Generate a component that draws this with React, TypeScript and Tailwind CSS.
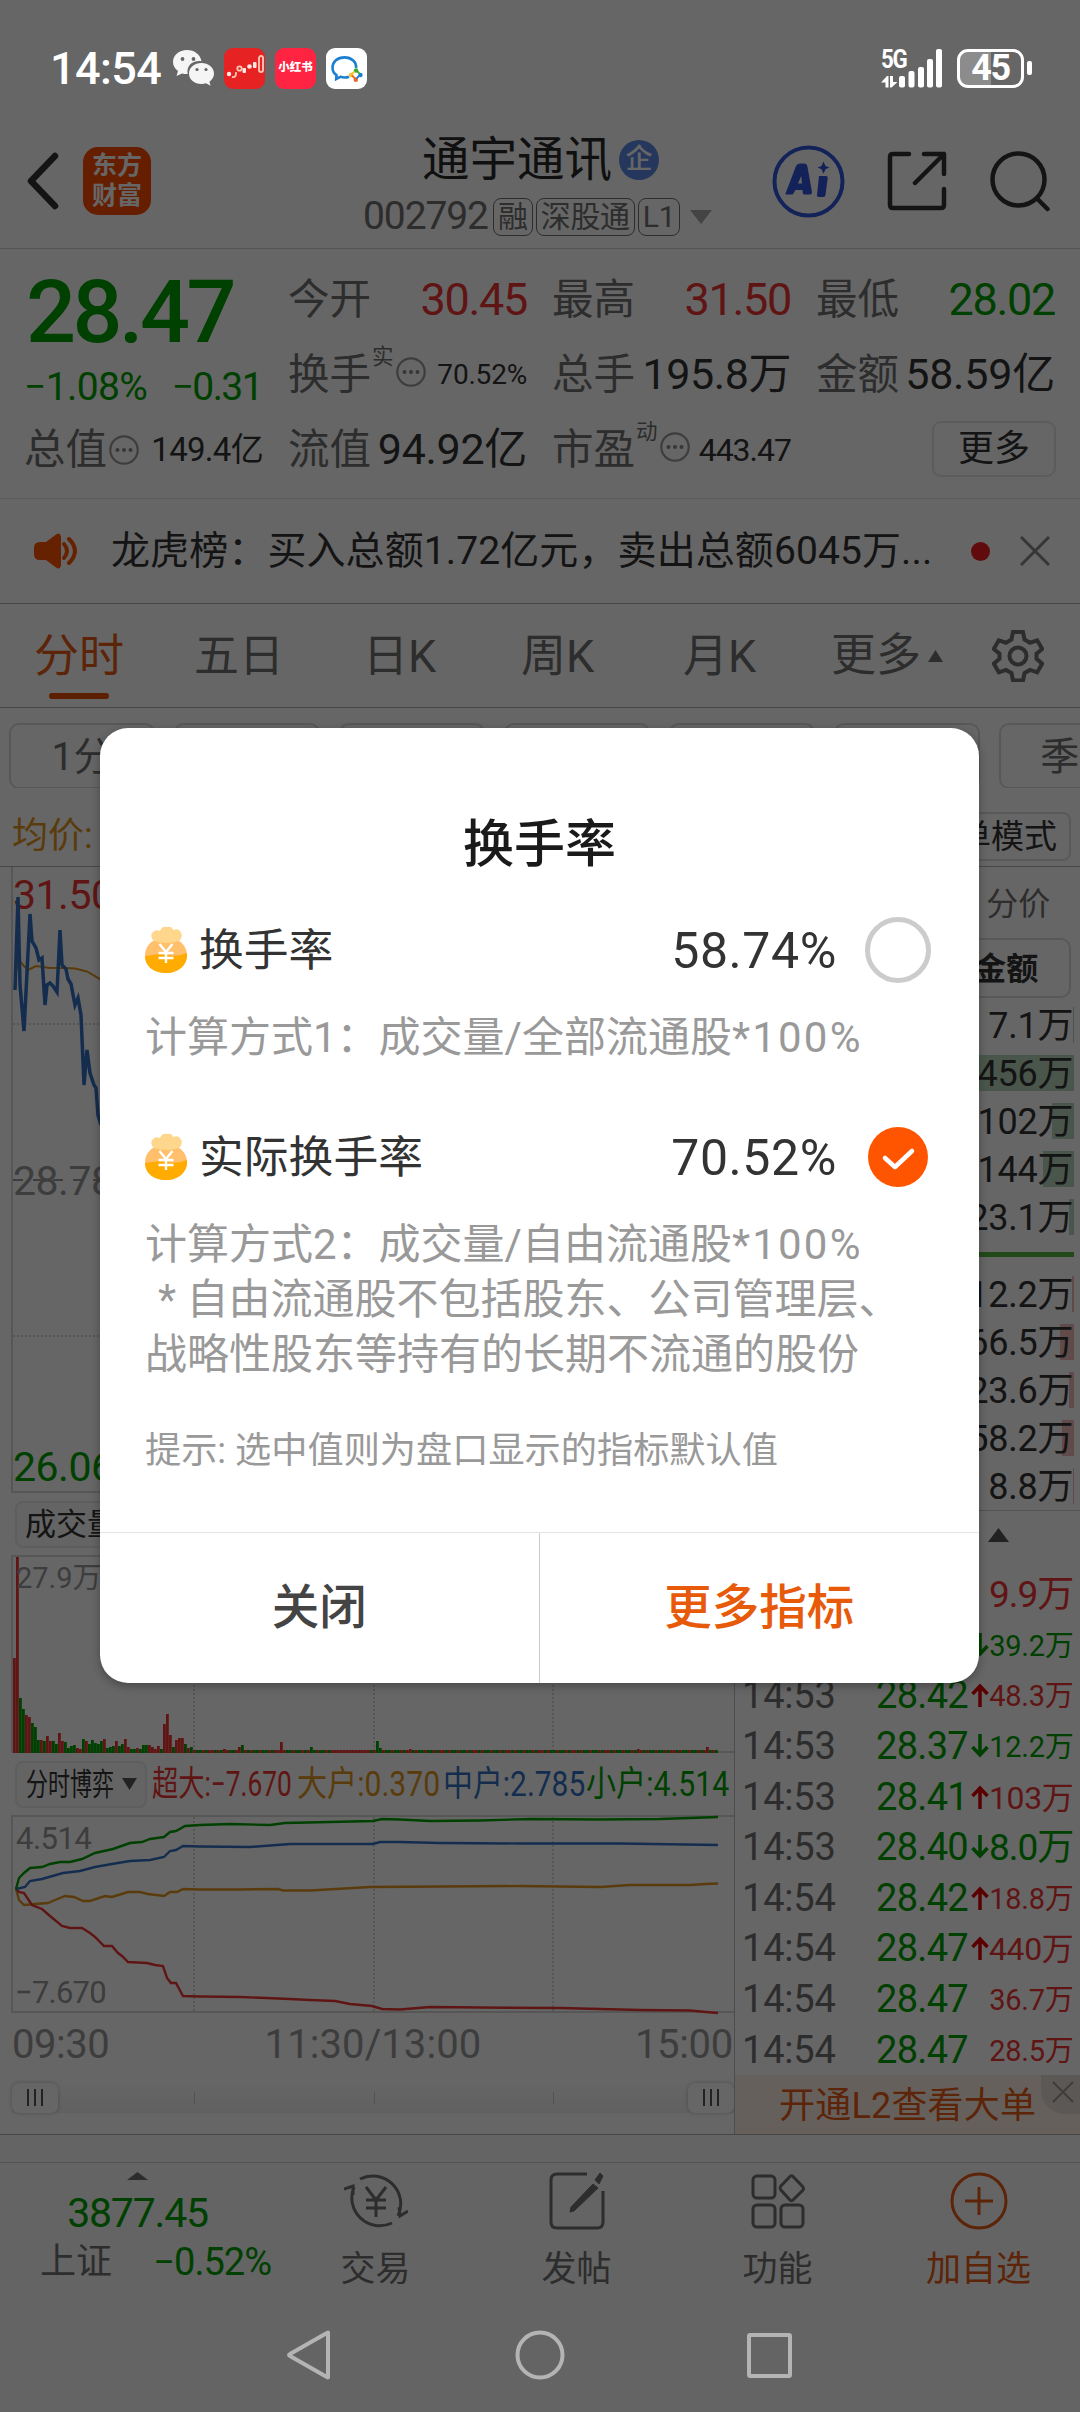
import type { ReactNode } from "react";

interface Quote {
  label: string;
  value: string;
  valueClass: string;
  sup?: string;
  more?: boolean;
}

const quoteColumns: Quote[][] = [
  [
    { label: "今开", value: "30.45", valueClass: "text-[45px] tracking-[-1.3px] text-[#f03535]" },
    { label: "换手", value: "70.52%", valueClass: "text-[28px] tracking-[-0.2px] text-[#333]", sup: "实", more: true },
    { label: "流值", value: "94.92亿", valueClass: "text-[43px] tracking-[-0.3px] text-[#333]" },
  ],
  [
    { label: "最高", value: "31.50", valueClass: "text-[45px] tracking-[-1.3px] text-[#f03535]" },
    { label: "总手", value: "195.8万", valueClass: "text-[43px] tracking-[-0.4px] text-[#333]" },
    { label: "市盈", value: "443.47", valueClass: "text-[32px] tracking-[-1px] text-[#333]", sup: "动", more: true },
  ],
  [
    { label: "最低", value: "28.02", valueClass: "text-[45px] tracking-[-1.3px] text-[#00a000]" },
    { label: "金额", value: "58.59亿", valueClass: "text-[43px] tracking-[-0.2px] text-[#333]" },
  ],
];

const tabs = [
  { label: "五日", className: "w-[169px]" },
  { label: "日K", className: "w-[158px]" },
  { label: "周K", className: "w-[162px]" },
  { label: "月K", className: "w-[152px]" },
];

const periods = ["1分", "5分", "15分", "30分", "60分", "120分", "季K"];

const asks = [
  { value: "7.1万", bar: 1 },
  { value: "456万", bar: 100 },
  { value: "102万", bar: 22 },
  { value: "144万", bar: 31 },
  { value: "23.1万", bar: 5 },
];

const bids = [
  { value: "12.2万", bar: 2 },
  { value: "66.5万", bar: 14 },
  { value: "23.6万", bar: 5 },
  { value: "58.2万", bar: 12 },
  { value: "8.8万", bar: 1 },
];

interface Tick {
  time: string;
  price: string;
  dir: "up" | "down" | "";
  volume: string;
  color: "red" | "green";
  size: "sm" | "md" | "lg";
}

const ticks: Tick[] = [
  { time: "14:53", price: "28.42", dir: "", volume: "9.9万", color: "red", size: "lg" },
  { time: "14:53", price: "28.41", dir: "down", volume: "39.2万", color: "green", size: "sm" },
  { time: "14:53", price: "28.42", dir: "up", volume: "48.3万", color: "red", size: "sm" },
  { time: "14:53", price: "28.37", dir: "down", volume: "12.2万", color: "green", size: "sm" },
  { time: "14:53", price: "28.41", dir: "up", volume: "103万", color: "red", size: "md" },
  { time: "14:53", price: "28.40", dir: "down", volume: "8.0万", color: "green", size: "lg" },
  { time: "14:54", price: "28.42", dir: "up", volume: "18.8万", color: "red", size: "sm" },
  { time: "14:54", price: "28.47", dir: "up", volume: "440万", color: "red", size: "md" },
  { time: "14:54", price: "28.47", dir: "", volume: "36.7万", color: "red", size: "sm" },
  { time: "14:54", price: "28.47", dir: "", volume: "28.5万", color: "red", size: "sm" },
];

const tickSize = {
  sm: "text-[29px] pt-[3px] tracking-[-0.3px]",
  md: "text-[32px] pt-[2px] tracking-[-0.4px]",
  lg: "text-[37px] tracking-[-1px]",
};

const RED = "#f03535";
const GREEN = "#00a000";

// opening minutes: height and direction (r = up, g = down)
const openingBars =
  "95r 197r 55g 44g 38r 36r 30g 26g 13g 13r 12g 17r 12r 12g 9g 20r 12r 11g 5g 7g 8g 5r 4r 14g 12r 9g 13g 10g 9g 12g 14r 5g 6g 7g 12r 7g 9g 14r 6r 4g 4g 5r 4g 8g 8g 8r 6r 4r 7r 4g 29r 39r 18r 6g 13r 15r 15r 9g 5r 6g".split(" ");

const spikes: Record<number, string> = {
  70: "4r", 75: "6r", 76: "8g", 89: "11r", 99: "6g", 121: "12g", 122: "5g", 132: "4r", 208: "4r", 231: "6r",
};

const volumeBars = Array.from({ length: 235 }, (_, i) => {
  const item = openingBars[i] ?? spikes[i] ?? ((i * 7) % 11 < 5 || (i > 105 && i < 118) ? "3r" : "3g");
  return { height: parseInt(item), up: item.endsWith("r") };
});

const TriangleDown = ({ className }: { className: string }) => (
  <svg viewBox="0 0 22 14" className={className} fill="currentColor" preserveAspectRatio="none">
    <path d="M0 0h22L11 14z" />
  </svg>
);

const TriangleUp = ({ className }: { className: string }) => (
  <svg viewBox="0 0 22 14" className={className} fill="currentColor" preserveAspectRatio="none">
    <path d="M0 14h22L11 0z" />
  </svg>
);

const Dots = () => (
  <svg viewBox="0 0 30 30" className="w-[30px] h-[30px] shrink-0" fill="none">
    <circle cx="15" cy="15" r="13.7" stroke="#999" strokeWidth="2.200" />
    <g fill="#888">
      <circle cx="8.5" cy="15" r="2" />
      <circle cx="15" cy="15" r="2" />
      <circle cx="21.5" cy="15" r="2" />
    </g>
  </svg>
);

const StatusBar = () => (
  <div className="relative z-20 flex items-center h-[110px] pl-[50px] pr-[48px] pt-[26px] text-white">
    <span className="w-[123px] text-[45px] font-medium leading-none tracking-[-0.6px]">14:54</span>
    <svg viewBox="0 0 42 36" className="w-[42px] h-[36px] text-[#f5f5f5]" fill="currentColor">
      <path d="M14 0C6 0 0 5.400 0 12c0 3.700 2 6.900 5 9l-1.500 5 5.500-2.600c1.900.6 3.700.8 5.700.7C13 15.500 20 10 28.500 11.200 27.500 4.800 21.500 0 14 0z" />
      <path d="M41 23.500c0-6-5.700-10.500-12.600-10.500S16 17.500 16 23.500 21.500 34 28.400 34c1.700 0 3.200-.3 4.600-.7l4.600 2.400-1.200-4c3-2 4.600-4.900 4.600-8.200z" />
      <g fill="#666">
        <circle cx="9.500" cy="9" r="1.900" />
        <circle cx="20.500" cy="9" r="1.900" />
        <circle cx="24" cy="19.500" r="1.600" />
        <circle cx="33" cy="19.500" r="1.600" />
      </g>
    </svg>
    <svg viewBox="0 0 41 41" className="w-[41px] h-[41px] ml-[9px]">
      <rect width="41" height="41" rx="9" fill="#e62222" />
      <g fill="none" stroke="#ffc9b9" strokeWidth="1.800">
        <path d="M8 29q4.500 1 4-5" />
        <circle cx="15.500" cy="20.500" r="2.200" />
        <rect x="35" y="8" width="4" height="16" rx="2" />
      </g>
      <g fill="#ffe9e2">
        <circle cx="5" cy="26" r="2.200" />
        <rect x="18.500" y="20" width="3.500" height="5" rx="1" />
        <circle cx="25.500" cy="18.500" r="2.300" />
        <rect x="29" y="14" width="3.500" height="6" rx="1" />
      </g>
    </svg>
    <div className="w-[41px] h-[41px] ml-[10px] rounded-[9px] bg-[#ff2442] flex items-center justify-center text-[11.500px] leading-none font-black whitespace-nowrap">
      小红书
    </div>
    <svg viewBox="0 0 41 41" className="w-[41px] h-[41px] ml-[10px]">
      <rect width="41" height="41" rx="9" fill="#fff" />
      <path d="M30 20c.8-6-4.500-10.600-11.500-10.600S6.500 13.800 6.500 19.500c0 3.500 1.500 6 4 7.600L10.200 31l4-2.200c3 1 6 1 8.800 0" fill="none" stroke="#1c7fd0" strokeWidth="2.600" />
      <g strokeWidth="1.800" strokeLinecap="round">
        <circle cx="30" cy="22.500" r="2.200" fill="#3aa935" />
        <circle cx="25" cy="27" r="2.200" fill="#fbc02d" />
        <circle cx="34.500" cy="27" r="2.200" fill="#1c7fd0" />
        <circle cx="29.800" cy="31.800" r="2.200" fill="#e8662b" />
        <path d="M30 22l3 3" stroke="#3aa935" />
        <path d="M25 27l3-3" stroke="#fbc02d" />
        <path d="M29.500 31l-3-3" stroke="#e8662b" />
        <path d="M34 27l-3 3" stroke="#1c7fd0" />
      </g>
    </svg>
    <div className="flex ml-auto items-center">
      <div className="relative w-[62px] h-[39px]">
        <span className="block origin-left scale-x-[0.86] text-[26px] leading-[20px] font-bold tracking-[-1.500px]">5G</span>
        <svg viewBox="0 0 62 39" className="absolute inset-0 w-[62px] h-[39px]" fill="currentColor">
          <path d="M4.500 27v11.500h3V27H6L0 33.500h4.500zM9 27v11.500h1.500L16.500 33H12v-6z" />
          <rect x="18" y="27" width="6" height="11.500" rx="2" />
          <rect x="27.500" y="22" width="6" height="16.500" rx="2" />
          <rect x="37" y="18" width="6" height="20.500" rx="2" />
          <rect x="46" y="10" width="6" height="28.500" rx="2" />
          <rect x="55" y="0" width="6" height="38.500" rx="2" />
        </svg>
      </div>
      <div className="ml-[14px] w-[67px] h-[39px] rounded-[11px] border-[3px] border-white flex items-center justify-center text-[36px] font-bold leading-none tracking-[-1.500px] bg-linear-to-r from-[#8c8c8c] from-50% to-transparent to-50%">
        45
      </div>
      <div className="ml-[3px] w-[5px] h-[14px] rounded-[2px] bg-white" />
    </div>
  </div>
);

const Tag = ({ children }: { children: ReactNode }) => (
  <span className="h-[38px] px-[4px] border-[1.500px] border-[#707070] rounded-[8px] text-[30px] leading-[35px] tracking-[-0.3px]">
    {children}
  </span>
);

const Header = () => (
  <header className="relative flex items-center h-[139px] pt-[4px] pl-[27px] border-b border-[#d0d0d0] text-[#333]">
    <svg viewBox="0 0 32 58" className="w-[32px] h-[58px]" fill="none" stroke="#333" strokeWidth="6.500" strokeLinecap="round" strokeLinejoin="round">
      <path d="M28 4L4 29l24 25" />
    </svg>
    <div className="ml-[24px] w-[68px] h-[68px] rounded-[15px] bg-[#ff4b00] text-white flex flex-col items-center justify-center text-[25px] leading-[30px] font-bold">
      <span>东方</span>
      <span>财富</span>
    </div>
    <div className="ml-[212px] mt-[11px] w-[350px] flex flex-col">
      <div className="flex items-center h-[50px] pl-[59px] text-[47.500px] leading-[50px] text-[#2a2a2a]">
        通宇通讯
        <span className="ml-[7px] w-[40px] h-[40px] rounded-full bg-[#5c8ae6] text-white text-[27px] leading-[38px] text-center font-medium">
          企
        </span>
      </div>
      <div className="flex items-center mt-[10px] h-[44px] gap-[3px] whitespace-nowrap text-[#707070]">
        <span className="w-[127px] text-[39px] leading-none tracking-[-1.100px]">002792</span>
        <Tag>融</Tag>
        <Tag>深股通</Tag>
        <Tag>L1</Tag>
        <TriangleDown className="ml-[7px] w-[22px] h-[14px] text-[#aaa]" />
      </div>
    </div>
    <div className="ml-[59px] flex items-center">
      <svg viewBox="0 0 73 73" className="w-[73px] h-[73px]" fill="#3058e0">
        <circle cx="36.500" cy="36.500" r="34" fill="none" stroke="#3058e0" strokeWidth="4" />
        <path d="M13.500 48.500L24 21q1-2.500 4-2.500h4q3 0 3.400 3L40 47q.2 2.500-2 2.500h-5.500q-1.500 0-1.700-1.500l-.4-3h-7l-1.600 3q-.8 1.500-2.300 1.500h-5q-1.500 0-1-1zM26 38.500h4l-.8-7.500z" fillRule="evenodd" />
        <path d="M47 31h7q2 0 1.700 2L53.500 50q-.3 2-2 2h-5q-1.800 0-1.500-2l2-19zM51.500 16.500l2 4.500 4 1.500-4 1.800-2 4.500-2-4.500-4-1.800 4-1.500z" />
      </svg>
      <svg viewBox="0 0 60 60" className="ml-[42px] w-[60px] h-[60px]" fill="none" stroke="#333" strokeWidth="4.500" strokeLinecap="round" strokeLinejoin="round">
        <path d="M22 3H6q-3 0-3 3v48q0 3 3 3h48q3 0 3-3V38M37 3h20v20M57 3L28 32" />
      </svg>
      <svg viewBox="0 0 62 62" className="ml-[42px] w-[62px] h-[62px]" fill="none" stroke="#333" strokeWidth="4.500" strokeLinecap="round">
        <circle cx="29.500" cy="29.500" r="26" />
        <path d="M48.500 49l10 10" />
      </svg>
    </div>
  </header>
);

const QuotePanel = () => (
  <section className="grid grid-cols-[237px_237px_237px_237px] gap-x-[27px] h-[250px] pl-[26px] pt-[13px] border-b border-[#e4e4e4]">
    <div>
      <div className="flex items-center h-[100px] text-[88px] leading-none font-medium tracking-[-3.500px] text-[#00a000]">28.47</div>
      <div className="flex items-center justify-between h-[50px] pr-[1px] text-[39px] leading-none text-[#00a000]">
        <span className="-ml-[2px] tracking-[-0.600px]">−1.08%</span>
        <span className="tracking-[-1.600px]">−0.31</span>
      </div>
      <div className="flex items-center h-[75px] leading-none">
        <span className="-ml-[2px] text-[41.500px] mr-[2px] text-[#707070]">总值</span>
        <Dots />
        <span className="ml-auto text-[33px] tracking-[-0.7px] text-[#333]">149.4亿</span>
      </div>
    </div>
    {quoteColumns.map((column, index) => (
      <div key={index}>
        {column.map((item) => (
          <div key={item.label} className="flex items-center h-[75px] leading-none whitespace-nowrap">
            <span className="-ml-[2px] text-[41.500px] text-[#707070]">{item.label}</span>
            {item.sup && <span className="ml-[1px] mb-[36px] text-[21.500px] text-[#707070]">{item.sup}</span>}
            {item.more && (
              <div className="ml-[2px] mb-[5px]">
                <Dots />
              </div>
            )}
            <span className={`ml-auto ${item.valueClass}`}>{item.value}</span>
          </div>
        ))}
        {index === 2 && (
          <button className="ml-[114px] mt-[9px] w-[124px] h-[56px] border-2 border-[#e6e6e6] rounded-[9px] text-[36px] leading-[48px] text-[#333]">
            更多
          </button>
        )}
      </div>
    ))}
  </section>
);

const NewsBar = () => (
  <section className="flex items-center h-[105px] pl-[34px] border-b border-[#b4b4b4] text-[#333]">
    <svg viewBox="0 0 44 38" className="w-[44px] h-[38px]" fill="#ff5500">
      <path d="M6 10h6L22 2.500q4-2.500 5 2v29q-1 4.500-5 2L12 28H6q-6 0-6-6v-6q0-6 6-6z" />
      <path d="M30 12q6 7 0 14M35 7q12 12 0 24" fill="none" stroke="#ff5500" strokeWidth="4" strokeLinecap="round" />
    </svg>
    <span className="ml-[33px] w-[850px] text-[39px] leading-none whitespace-nowrap tracking-[0.1px]">
      龙虎榜：买入总额1.72亿元，卖出总额6045万...
    </span>
    <span className="ml-[10px] w-[19px] h-[19px] rounded-full bg-[#f02020]" />
    <svg viewBox="0 0 30 30" className="ml-[30px] w-[30px] h-[30px]" stroke="#888" strokeWidth="3">
      <path d="M1 1l28 28M29 1L1 29" />
    </svg>
  </section>
);

const ChartTabs = () => (
  <nav className="flex h-[104px] pl-[34px] border-b border-[#b4b4b4] text-[45px] leading-[106px] text-[#707070]">
    <div className="relative w-[160px] text-[#e65a14]">
      分时
      <span className="absolute left-[15px] bottom-[8px] w-[60px] h-[6px] rounded-full bg-[#e64f00]" />
    </div>
    {tabs.map((tab) => (
      <div key={tab.label} className={tab.className}>
        {tab.label}
      </div>
    ))}
    <div className="flex items-center -ml-[4px]">
      更多
      <TriangleUp className="ml-[7px] w-[15px] h-[12px]" />
    </div>
    <svg viewBox="0 0 52 52" className="ml-[49px] mt-[26px] w-[52px] h-[52px]" fill="none" stroke="#707070" strokeWidth="4">
      <path d="M21 2h10l1.500 7.500 5.500 3.200 7.200-2.400 5 8.700-5.700 4.800v5l5.700 4.800-5 8.700-7.200-2.400-5.500 3.200L31 50.500H21l-1.500-7.400-5.500-3.200-7.200 2.400-5-8.700 5.700-4.800v-5L1.800 19l5-8.700 7.200 2.400 5.500-3.200z" />
      <circle cx="26" cy="26" r="8.500" />
    </svg>
  </nav>
);

const PriceChart = () => (
  <div className="relative h-[626px] ml-[11px] border-l-2 border-b-2 border-[#d8d8d8]">
    <span className="absolute left-0 top-[7px] text-[41px] leading-[42px] tracking-[-0.5px] text-[#f03535]">31.50</span>
    <svg viewBox="13 867 720 624" className="absolute inset-0 w-[720px] h-[624px]" fill="none">
      <path d="M13 1024H733M13 1336H733" stroke="#ccc" strokeWidth="1.500" strokeDasharray="2 2" />
      <path d="M13 1180H733" stroke="#999" strokeWidth="2" strokeDasharray="10 10" />
      <path d="M16 971l3-11 5 6 4 4 8-4 14 2h15l10 .5 12 3 13 7.500 13 6" stroke="#e09520" strokeWidth="2" />
      <path
        d="M15 990L18 897 20 985 24 1031 30 914 32 941 36 948 39 960 42 958 45 1005 47 985 50 983 53 986 57 992 60 930 62 965 66 969 68 979 71 984 75 1005 78 998 81 1015 84 1085 87 1050 90 1073 94 1085 96 1088 98 1115 101 1125"
        stroke="#3372c4"
        strokeWidth="3.500"
      />
    </svg>
    <span className="absolute left-0 top-[293px] text-[41px] leading-[42px] tracking-[-0.5px] text-[#999]">28.78</span>
    <span className="absolute left-0 bottom-[3px] text-[41px] leading-[42px] tracking-[-0.5px] text-[#00a000]">26.06</span>
  </div>
);

const VolumeChart = () => (
  <div className="relative h-[198px] ml-[11px] border-2 border-r-0 border-[#d8d8d8]">
    <svg viewBox="0 0 720 196" className="absolute left-0 top-0 w-[720px] h-[196px]">
      <path d="M181 0V196M361 0V196M540 0V196" stroke="#ccc" strokeWidth="1.500" strokeDasharray="2 2" />
      {volumeBars.map((bar, i) => (
        <rect key={i} x={i * 3} y={196 - bar.height} width="2.800" height={bar.height} fill={bar.up ? RED : GREEN} />
      ))}
    </svg>
    <span className="absolute left-[3px] top-[6px] text-[29px] leading-[30px] text-[#999]">27.9万</span>
  </div>
);

const FlowChart = () => (
  <div className="relative h-[198px] ml-[11px] border-2 border-r-0 border-[#d8d8d8]">
    <svg viewBox="13 1817 720 196" className="absolute left-0 top-0 w-[720px] h-[196px] overflow-visible" fill="none" strokeWidth="2.400">
      <path d="M194 1817V2013M374 1817V2013M553 1817V2013" stroke="#ccc" strokeWidth="1.500" strokeDasharray="2 2" />
      <polyline stroke="#e09520" points="16,1889 19,1900 24,1905 35,1904 48,1903 55,1900 65,1896 74,1897 83,1901 90,1901 105,1896 112,1897 128,1892 140,1892 148,1894 164,1896 170,1892 177,1892 183,1889 200,1889.5 240,1889.5 278,1889 283,1890.5 310,1890.5 370,1887 440,1886.5 520,1886 600,1887 630,1885 690,1885 706,1884 718,1883.5" />
      <polyline stroke={RED} points="16,1889 19,1892 24,1893 32,1905 42,1909 50,1916 62,1926 70,1928 82,1928 90,1933 95,1937 104,1946 112,1946 118,1953 122,1956 128,1962 147,1963 155,1965 163,1966 167,1978 171,1983 176,1983 183,1996 200,1996.5 240,1997 290,1999 310,2000 335,2001 350,2004 372,2006 382,2009 400,2009.5 430,2007 480,2007.5 560,2008 640,2010 690,2010.5 706,2012 718,2013" />
      <polyline stroke="#3372c4" points="16,1889 25,1887 30,1881 42,1879 63,1873 80,1871 95,1867 112,1864 130,1861 150,1860 164,1857 170,1851 176,1850 183,1846 200,1846.5 250,1847 290,1844 373,1844 380,1842 400,1842 440,1843 520,1843.5 620,1843.5 718,1845" />
      <polyline stroke={GREEN} points="16,1889 19,1878 24,1873 30,1868 42,1867 50,1864 60,1862 70,1862 82,1859 95,1853 113,1849 130,1843 142,1842 150,1839 164,1837 170,1832 176,1831 185,1826 200,1825 230,1824 270,1825 285,1823 330,1822 373,1821 382,1819 400,1819.5 430,1821 480,1820.5 530,1819 600,1819.5 660,1819 690,1818 718,1817" />
    </svg>
    <span className="absolute left-[3px] top-[6px] text-[31px] leading-[32px] tracking-[-0.5px] text-[#999]">4.514</span>
    <span className="absolute left-[2px] bottom-[2px] text-[31px] leading-[32px] tracking-[-0.8px] text-[#999]">−7.670</span>
  </div>
);

const flows = [
  { text: "超大:−7.670", className: "w-[145px] text-[#f03535]", textClass: "scale-x-[0.75]" },
  { text: "大户:0.370", className: "w-[146px] text-[#e09520]", textClass: "scale-x-[0.86]" },
  { text: "中户:2.785", className: "w-[143px] text-[#3372c4]", textClass: "scale-x-[0.855]" },
  { text: "小户:4.514", className: "w-[142px] text-[#00a000]", textClass: "scale-x-[0.86]" },
];

const Handle = () => (
  <div className="flex items-center justify-center gap-[5px] w-[46px] h-[30px] rounded-[7px] bg-white shadow-[0_0_4px_rgba(0,0,0,0.25)]">
    <i className="w-[2px] h-[17px] bg-[#555]" />
    <i className="w-[2px] h-[17px] bg-[#555]" />
    <i className="w-[2px] h-[17px] bg-[#555]" />
  </div>
);

const Charts = () => (
  <div className="w-[734px] shrink-0">
    <PriceChart />
    <div className="h-[62px] pt-[8px] pl-[15px]">
      <div className="w-[132px] h-[47px] pl-[8px] border-2 border-[#ebebeb] bg-[#fafafa] rounded-[8px] text-[31px] leading-[43px] text-[#333]">
        成交量
      </div>
    </div>
    <VolumeChart />
    <div className="flex items-center h-[62px] pl-[15px] whitespace-nowrap">
      <div className="flex items-center w-[132px] h-[47px] pl-[9px] mr-[5px] border-2 border-[#ebebeb] bg-[#fafafa] rounded-[8px] text-[#333]">
        <span className="w-[96px] text-[31px] leading-none">
          <span className="inline-block origin-left scale-x-[0.71]">分时博弈</span>
        </span>
        <TriangleDown className="w-[15px] h-[12px] shrink-0 text-[#555]" />
      </div>
      {flows.map((flow) => (
        <span key={flow.text} className={`text-[35px] leading-none ${flow.className}`}>
          <span className={`inline-block origin-left ${flow.textClass}`}>{flow.text}</span>
        </span>
      ))}
    </div>
    <FlowChart />
    <div className="flex items-center justify-between h-[60px] pt-[3px] pl-[12px] pr-[1px] text-[40px] leading-none text-[#999]">
      <span className="tracking-[-0.500px]">09:30</span>
      <span className="pl-[2px] tracking-[0.100px]">11:30/13:00</span>
      <span className="tracking-[-0.300px]">15:00</span>
    </div>
    <div className="flex items-center mt-[9px] ml-[12px] w-[722px] h-[31px] bg-linear-to-b from-transparent from-5px to-[#f0f0f0] to-5px">
      <Handle />
      <i className="ml-[136px] w-px h-[12px] bg-[#ccc]" />
      <i className="ml-[179px] w-px h-[12px] bg-[#ccc]" />
      <i className="ml-[178px] mr-auto w-px h-[12px] bg-[#ccc]" />
      <Handle />
    </div>
  </div>
);

const OrderRow = ({ value, bar, barClass }: { value: string; bar: number; barClass: string }) => (
  <div className="relative flex items-center justify-end h-[48px] mr-[6px] pt-px pr-[1px] whitespace-nowrap">
    <div className={`absolute right-0 top-[6px] h-[36px] ${barClass}`} style={{ width: bar }} />
    <span className="relative text-[36px] leading-none tracking-[-0.200px] text-[#333]">{value}</span>
  </div>
);

const Arrow = ({ dir }: { dir: "up" | "down" }) => (
  <svg
    viewBox="0 0 18 24"
    className={dir === "up" ? "w-[18px] h-[24px] shrink-0" : "w-[18px] h-[24px] shrink-0 rotate-180"}
    fill="none"
    stroke={dir === "up" ? "#e00000" : "#00a000"}
    strokeWidth="3.500"
  >
    <path d="M9 24V3M1.500 11L9 3l7.500 8" />
  </svg>
);

const OrderBook = () => (
  <aside className="flex-1 border-l border-[#c0c0c0]">
    <div className="flex justify-end h-[71px] pr-[30px] text-[32px] leading-[74px] text-[#707070]">分价</div>
    <div className="w-[140px] h-[60px] ml-auto mr-[9px] pr-[31px] border-2 border-[#dcdcdc] rounded-[10px] text-right text-[32px] leading-[58px] font-bold text-[#333]">
      金额
    </div>
    <div className="pt-[3px]">
      {asks.map((row) => (
        <OrderRow key={row.value} {...row} barClass="bg-[#b8d8bc]" />
      ))}
    </div>
    <div className="h-[5px] mt-[11px] mb-[13px] mr-[6px] bg-[#55b840]" />
    {bids.map((row) => (
      <OrderRow key={row.value} {...row} barClass="bg-[#f0b8b8]" />
    ))}
    <div className="flex justify-end h-[59px] pt-[17px] pr-[71px] border-t border-[#d0d0d0] text-[#555]">
      <TriangleUp className="w-[21px] h-[14px]" />
    </div>
    {ticks.map((tick, i) => (
      <div key={i} className="flex items-center h-[50.6px] pl-[7px] pr-[7px] leading-none whitespace-nowrap">
        <span className="w-[134px] text-[38px] tracking-[-0.2px] text-[#707070]">{tick.time}</span>
        <span className="w-[95px] shrink-0 text-[38px] tracking-[-0.700px] text-[#00a000]">{tick.price}</span>
        {tick.dir && <Arrow dir={tick.dir} />}
        <span className={`ml-auto ${tickSize[tick.size]} ${tick.color === "red" ? "text-[#f03535]" : "text-[#00a000]"}`}>
          {tick.volume}
        </span>
      </div>
    ))}
    <div className="relative h-[59px] pl-[44px] bg-[#fff0e6] text-[36px] leading-[63px] tracking-[0.200px] text-[#e65a14]">
      开通L2查看大单
      <span className="absolute right-0 top-0 flex items-start justify-end pr-[6px] pt-[6px] w-[39px] h-[39px] rounded-bl-[24px] bg-[#e6dcd6]">
        <svg viewBox="0 0 22 22" className="w-[22px] h-[22px]" stroke="#999" strokeWidth="2">
          <path d="M1 1l20 20M21 1L1 21" />
        </svg>
      </span>
    </div>
  </aside>
);

const ToolItem = ({ label, children, className = "text-[#707070]" }: { label: string; children: ReactNode; className?: string }) => (
  <div className={`flex flex-col items-center w-[201px] pt-[8px] ${className}`}>
    <svg viewBox="0 0 64 60" className="w-[64px] h-[60px]" fill="none" stroke="currentColor" strokeWidth="3">
      {children}
    </svg>
    <span className="mt-[17px] text-[35px] leading-[43px]">{label}</span>
  </div>
);

const Toolbar = () => (
  <footer className="flex h-[136px] bg-[#fafafa] border-t border-[#d0d0d0]">
    <div className="w-[275px] shrink-0 flex flex-col items-center pt-[9px] text-[#00a000]">
      <TriangleUp className="w-[21px] h-[8px] text-[#707070]" />
      <span className="mt-[12px] text-[41px] leading-[42px] tracking-[-1.200px]">3877.45</span>
      <div className="flex items-center justify-between mt-[8px] w-[231px] ml-[36px] h-[40px] leading-none">
        <span className="text-[36px] text-[#707070]">上证</span>
        <span className="text-[38px] tracking-[-1px]">−0.52%</span>
      </div>
    </div>
    <ToolItem label="交易">
      <path d="M16 8a28 28 0 0 1 38 37M48 52A28 28 0 0 1 10 16M0 18l9-3v9M64 40l-8 5-1-9" />
      <path d="M22 16l10 13 10-13M32 29v17M22 29h20M22 37h20" />
    </ToolItem>
    <ToolItem label="发帖">
      <path d="M42 3H12q-6 0-6 6v42q0 6 6 6h40q6 0 6-6V20" />
      <path d="M50 9l5-7 3 3-4 8zM48 13l5 4-24 23-4 1 1-5z" fill="currentColor" strokeWidth="1" />
    </ToolItem>
    <ToolItem label="功能">
      <rect x="7" y="5" width="22" height="22" rx="4" />
      <path d="M44 5.500q1.500-1.500 3 0l10 10.500q1 1.500 0 3L47 29q-1.500 1.500-3 0L34.500 18.500q-1-1.500 0-3z" />
      <rect x="7" y="34" width="22" height="22" rx="4" />
      <rect x="35" y="34" width="22" height="22" rx="4" />
    </ToolItem>
    <ToolItem label="加自选" className="text-[#e65a14]">
      <circle cx="32" cy="30" r="27" />
      <path d="M32 16v28M18 30h28" />
    </ToolItem>
  </footer>
);

const SystemNav = () => (
  <div className="relative flex justify-center h-[114px] bg-[#fafafa]">
    <svg viewBox="0 0 520 60" className="relative z-20 mt-[27px] w-[520px] h-[60px]" fill="none" stroke="#b4b4b4" strokeWidth="4" strokeLinejoin="round">
      <path d="M48 7.500v45q0 0-2-1L10 31q-2-1 0-2L46 8.500z" />
      <circle cx="260" cy="30" r="22.500" />
      <rect x="469" y="10" width="41" height="41" rx="1" />
    </svg>
  </div>
);

const MoneyBag = () => (
  <svg viewBox="0 0 44 48" className="w-[44px] h-[48px]">
    <ellipse cx="22" cy="29" rx="21" ry="18" fill="#ffbf6b" />
    <path d="M1 30c8-1 14-3 22-1s14 0 20-2c1 12-8 20-21 20S1 40 1 30z" fill="#ffab00" />
    <path d="M10 15q-5-5-1-9 3-3 7-1 2-5 7-4 5-1 6 3 5-2 7 1 4 5-1 10-13 4-25 0z" fill="#ffd78c" />
    <path d="M15.500 18l6.500 8 6.500-8M22 26v11M14.500 27h15M14.500 32h15" fill="none" stroke="#fff" strokeWidth="2.400" />
  </svg>
);

interface OptionProps {
  name: string;
  value: string;
  checked?: boolean;
}

const Option = ({ name, value, checked }: OptionProps) => (
  <div className="flex items-center h-[68px] pl-[44px] pr-[47px] leading-none text-[#333]">
    <MoneyBag />
    <span className="ml-[11px] pt-[3px] text-[44.800px]">{name}</span>
    <span className="ml-auto mr-[27px] pt-px text-[50px] tracking-[0.6px]">{value}</span>
    <svg viewBox="0 0 68 68" className="w-[68px] h-[68px]" fill="none">
      {checked ? (
        <>
          <circle cx="34" cy="34" r="30" fill="#ff5500" />
          <path d="M21 35l10 9 17-16" stroke="#fff" strokeWidth="4.500" strokeLinecap="round" strokeLinejoin="round" />
        </>
      ) : (
        <circle cx="34" cy="34" r="30.500" stroke="#ccc" strokeWidth="5" />
      )}
    </svg>
  </div>
);

const TurnoverDialog = () => (
  <div className="absolute z-20 left-[100px] top-[728px] w-[879px] h-[955px] flex flex-col rounded-[28px] bg-white shadow-[0_3px_10px_rgba(0,0,0,0.3)] whitespace-nowrap">
    <h2 className="pt-[87px] h-[188px] text-center text-[51px] leading-[60px] font-medium text-[#1a1a1a]">换手率</h2>
    <Option name="换手率" value="58.74%" />
    <p className="h-[139px] pt-[26px] pl-[45px] text-[42px] leading-[56px] text-[#999]">
      计算方式1：成交量/全部流通股<span className="tracking-[2.200px]">*100%</span>
    </p>
    <Option name="实际换手率" value="70.52%" checked />
    <div className="h-[222px] pt-[26px] pl-[45px] text-[42px] leading-[55px] text-[#999]">
      <p>
        计算方式2：成交量/自由流通股<span className="tracking-[2.200px]">*100%</span>
      </p>
      <p className="pl-[13px]">* 自由流通股不包括股东、公司管理层、</p>
      <p>战略性股东等持有的长期不流通的股份</p>
    </div>
    <p className="pl-[45px] pt-[15px] text-[36.200px] leading-[45px] text-[#999]">提示: 选中值则为盘口显示的指标默认值</p>
    <div className="grid grid-cols-2 mt-auto h-[151px] border-t border-[#e4e4e4] text-[47.500px] leading-[150px] font-medium">
      <button className="text-[#444] border-r border-[#ccc]">关闭</button>
      <button className="text-[#e65a0a]">更多指标</button>
    </div>
  </div>
);

export default function App() {
  return (
    <div className="relative w-[1080px] h-[2412px] overflow-hidden bg-white font-['Roboto','Noto_Sans_CJK_SC',sans-serif]">
      <div className="absolute inset-0 z-10 bg-black/60" />
      <StatusBar />
      <Header />
      <QuotePanel />
      <NewsBar />
      <ChartTabs />
      {/* Period pills */}
      <div className="flex gap-[19px] h-[80px] pl-[9px] pt-[15px] overflow-hidden">
        {periods.map((period) => (
          <div
            key={period}
            className="w-[146px] h-[66px] shrink-0 border-2 border-[#dcdcdc] rounded-[10px] text-center text-[39px] leading-[64px] text-[#707070]"
          >
            {period}
          </div>
        ))}
      </div>
      {/* Average price line */}
      <div className="flex items-center justify-between h-[79px] pl-[12px] pr-[9px] pt-[18px] border-b border-[#b4b4b4]">
        <span className="text-[36px] leading-none text-[#e09520]">均价: 28.94</span>
        <span className="px-[12px] h-[49px] border-2 border-[#dedede] rounded-[8px] text-[33px] leading-[45px] text-[#333]">
          简单模式
        </span>
      </div>
      <div className="flex h-[1268px] border-b border-[#b4b4b4]">
        <Charts />
        <OrderBook />
      </div>
      <div className="h-[27px] bg-[#fafafa]" />
      <Toolbar />
      <SystemNav />
      <TurnoverDialog />
    </div>
  );
}
